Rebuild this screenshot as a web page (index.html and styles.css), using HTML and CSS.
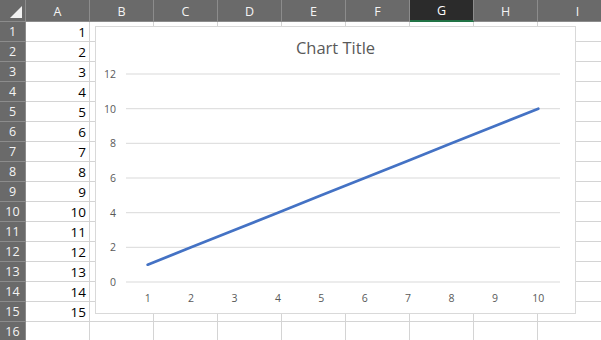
FILE: index.html
```html
<!DOCTYPE html>
<html lang="en">
<head>
    <meta charset="UTF-8">
    <meta name="viewport" content="width=device-width, initial-scale=1.0">
    <title>Sheet1</title>
    <link rel="stylesheet" href="styles.css">
</head>
<body>
    <div class="sheet">
        <div class="grid" id="grid">
            <div class="corner"><span class="tri"></span></div>
            <div class="colhead">A</div>
            <div class="colhead">B</div>
            <div class="colhead">C</div>
            <div class="colhead">D</div>
            <div class="colhead">E</div>
            <div class="colhead">F</div>
            <div class="colhead active">G</div>
            <div class="colhead">H</div>
            <div class="colhead">I</div>
        </div>

        <div class="chart">
            <div class="chart-title">Chart Title</div>
            <svg class="plot" width="481" height="288" viewBox="95 26 481 288">
                <g class="gridlines">
                    <line x1="126" y1="74" x2="560" y2="74"/>
                    <line x1="126" y1="108.7" x2="560" y2="108.7"/>
                    <line x1="126" y1="143.3" x2="560" y2="143.3"/>
                    <line x1="126" y1="178" x2="560" y2="178"/>
                    <line x1="126" y1="212.7" x2="560" y2="212.7"/>
                    <line x1="126" y1="247.3" x2="560" y2="247.3"/>
                    <line x1="126" y1="282" x2="560" y2="282"/>
                </g>
                <g class="ylabels">
                    <text x="116" y="78">12</text>
                    <text x="116" y="112.7">10</text>
                    <text x="116" y="147.3">8</text>
                    <text x="116" y="182">6</text>
                    <text x="116" y="216.7">4</text>
                    <text x="116" y="251.3">2</text>
                    <text x="116" y="286">0</text>
                </g>
                <g class="xlabels">
                    <text x="147.7" y="302">1</text>
                    <text x="191.1" y="302">2</text>
                    <text x="234.5" y="302">3</text>
                    <text x="277.9" y="302">4</text>
                    <text x="321.3" y="302">5</text>
                    <text x="364.7" y="302">6</text>
                    <text x="408.1" y="302">7</text>
                    <text x="451.5" y="302">8</text>
                    <text x="494.9" y="302">9</text>
                    <text x="538.3" y="302">10</text>
                </g>
                <polyline class="series" points="147.7,264.7 191.1,247.3 234.5,230 277.9,212.7 321.3,195.3 364.7,178 408.1,160.7 451.5,143.3 494.9,126 538.3,108.7"/>
            </svg>
        </div>
    </div>

    <script>
        // fill rows 1..16 with column A values
        var grid = document.getElementById('grid');
        for (var r = 1; r <= 16; r++) {
            var head = document.createElement('div');
            head.className = 'rowhead';
            head.textContent = r;
            grid.appendChild(head);
            for (var c = 0; c < 9; c++) {
                var cell = document.createElement('div');
                cell.className = 'cell';
                if (c === 0 && r <= 15) cell.textContent = r;
                grid.appendChild(cell);
            }
        }
    </script>
</body>
</html>
```

FILE: styles.css
```css
body {
    margin: 0;
    background: #ffffff;
    font-family: "Open Sans", "Liberation Sans", sans-serif;
    overflow: hidden;
}
.sheet {
    position: relative;
    width: 601px;
    height: 340px;
    overflow: hidden;
}
.grid {
    display: grid;
    grid-template-columns: 26px repeat(8, 64px) 80px;
    grid-template-rows: 22px repeat(16, 20px);
}
.corner {
    background: #6a6a6a;
    border-right: 1px solid #8c8c8c;
    border-bottom: 1px solid #8c8c8c;
    position: relative;
    box-sizing: border-box;
}
.tri {
    position: absolute;
    right: 3px;
    bottom: 3px;
    width: 0;
    height: 0;
    border-left: 12px solid transparent;
    border-bottom: 12px solid #f2f2f2;
}
.colhead {
    background: #6a6a6a;
    color: #f4f4f4;
    font-size: 12.5px;
    display: flex;
    align-items: center;
    justify-content: center;
    border-right: 1px solid #8c8c8c;
    border-bottom: 1px solid #8c8c8c;
    box-sizing: border-box;
    padding-top: 1px;
}
.colhead.active {
    background: #2b2b2b;
    color: #ffffff;
    border-bottom: 2px solid #217346;
}
.rowhead {
    background: #6a6a6a;
    color: #f4f4f4;
    font-size: 12.5px;
    display: flex;
    align-items: center;
    justify-content: center;
    border-right: 1px solid #8c8c8c;
    border-bottom: 1px solid #8c8c8c;
    box-sizing: border-box;
}
.cell {
    border-right: 1px solid #d4d4d4;
    border-bottom: 1px solid #d4d4d4;
    box-sizing: border-box;
    font-family: "Open Sans", "Liberation Sans", sans-serif;
    font-size: 13.5px;
    color: #000000;
    text-align: right;
    padding-right: 3px;
    line-height: 20px;
}
.chart {
    position: absolute;
    left: 95px;
    top: 26px;
    width: 481px;
    height: 288px;
    background: #ffffff;
    border: 1px solid #d9d9d9;
    box-sizing: border-box;
}
.chart-title {
    position: absolute;
    left: 0;
    right: 0;
    top: 9px;
    text-align: center;
    font-size: 16.5px;
    color: #595959;
}
.plot {
    position: absolute;
    left: -1px;
    top: -1px;
}
.gridlines line {
    stroke: #d9d9d9;
    stroke-width: 1;
}
.plot text {
    font-family: "Open Sans", "Liberation Sans", sans-serif;
    font-size: 10.5px;
    fill: #595959;
}
.ylabels text {
    text-anchor: end;
}
.xlabels text {
    text-anchor: middle;
}
.series {
    fill: none;
    stroke: #4472c4;
    stroke-width: 2.75;
    stroke-linecap: round;
    stroke-linejoin: round;
}
```
